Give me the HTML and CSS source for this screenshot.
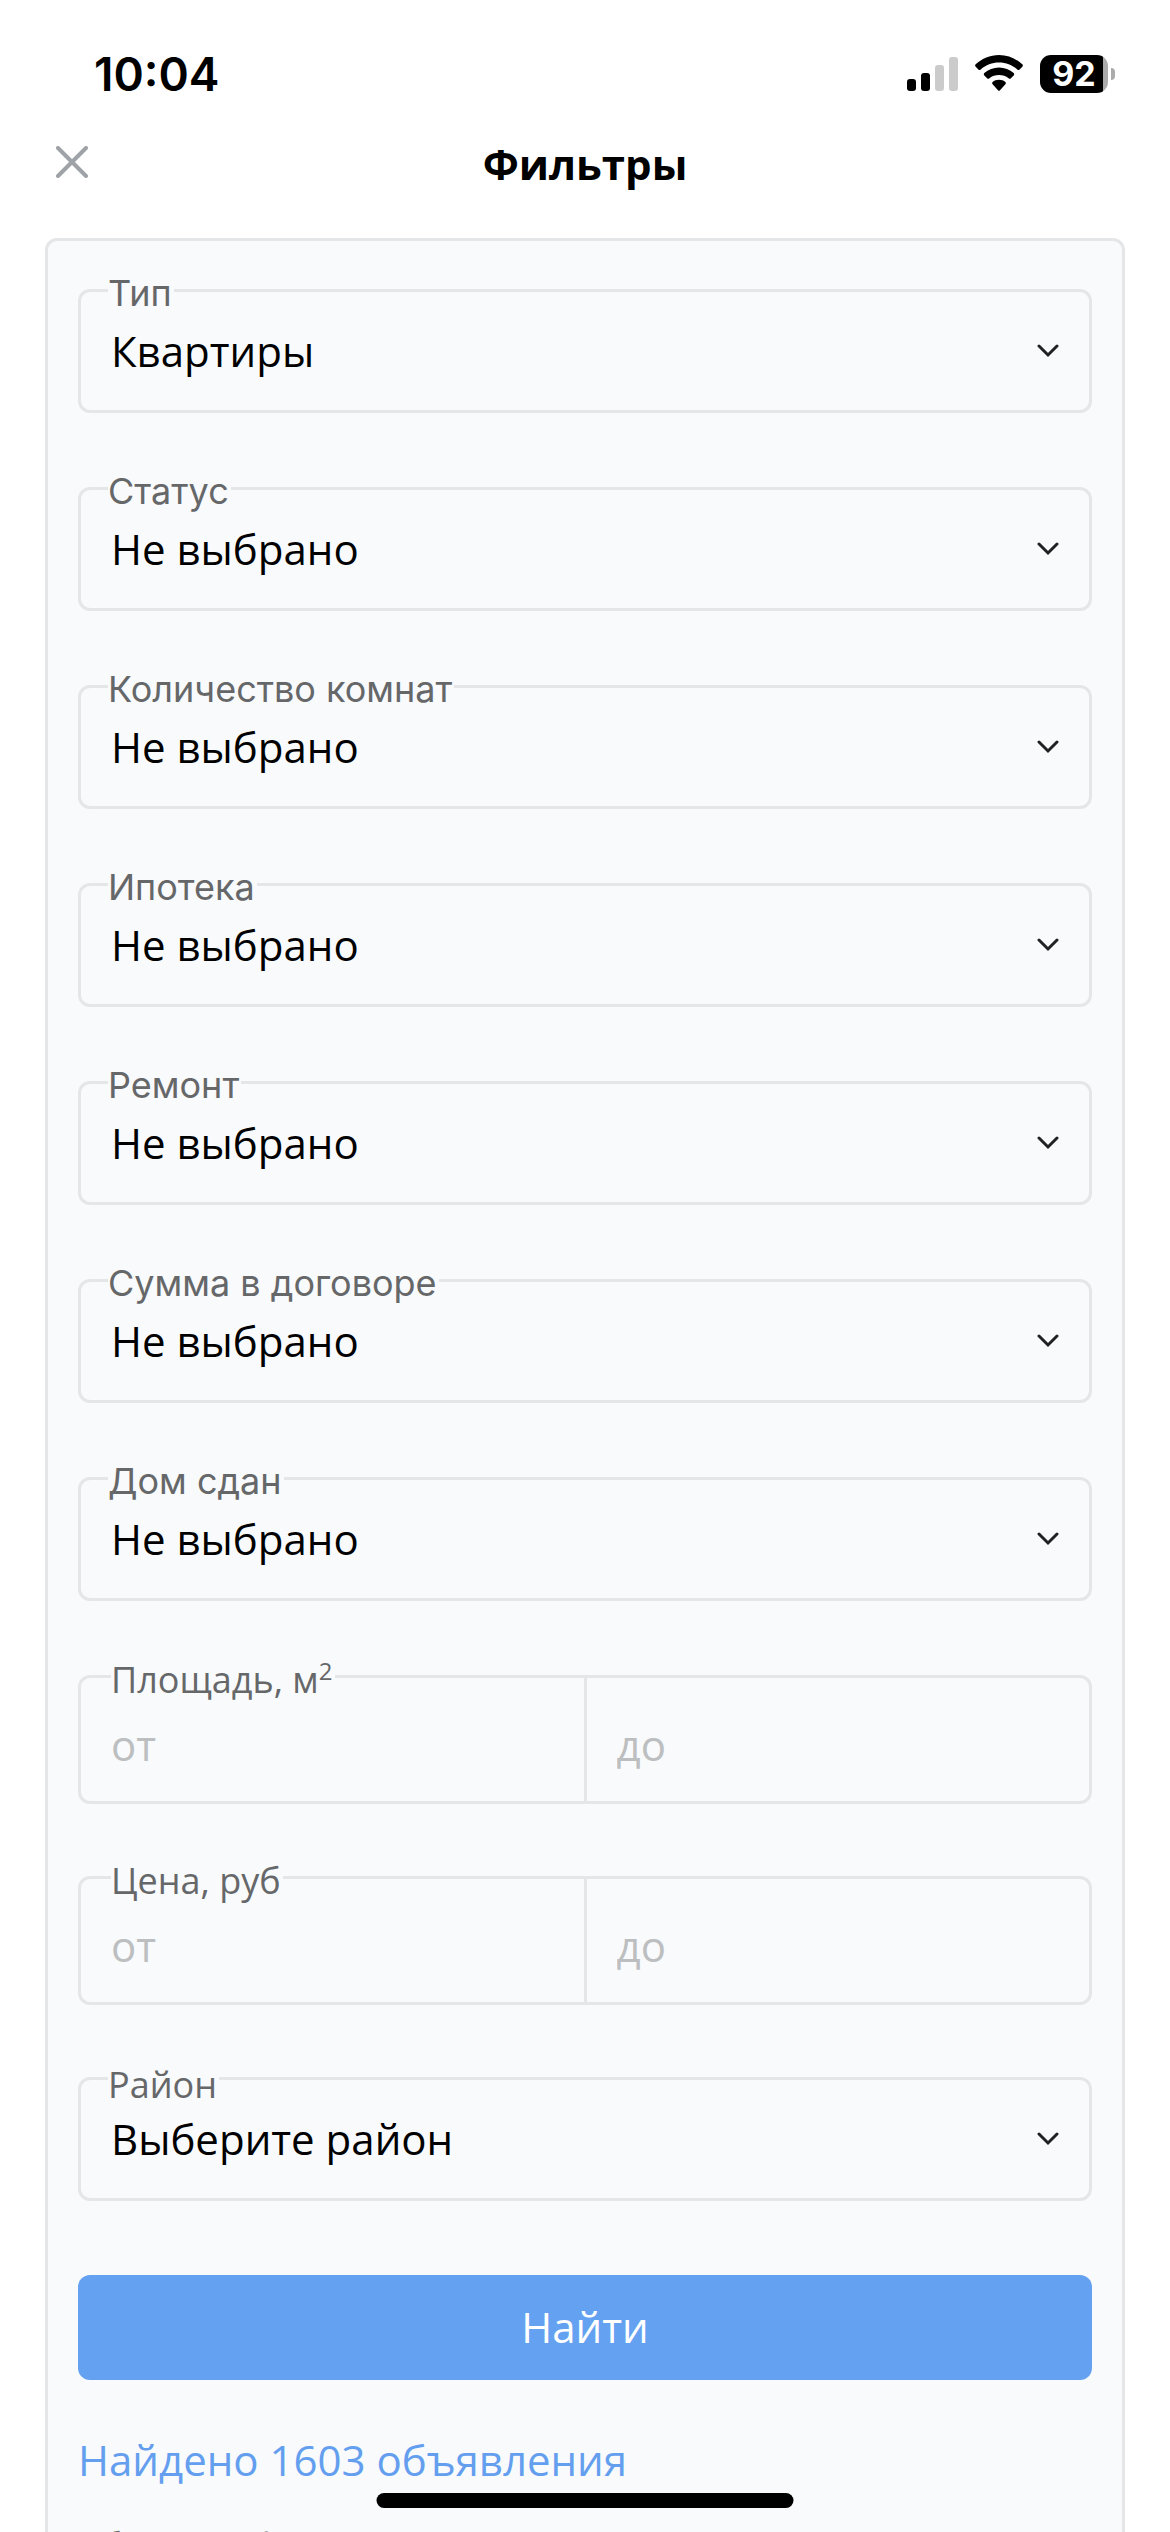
FILE: index.html
```html
<!DOCTYPE html>
<html lang="ru">
<head>
  <meta charset="UTF-8" />
  <meta name="viewport" content="width=device-width, initial-scale=1.0" />
  <title>Фильтры</title>
  <link rel="stylesheet" href="styles.css">
</head>
<body>
  <div class="status-bar">
    <span class="time">10:04</span>
    <div class="status-icons">
      <svg class="signal" width="51" height="38" viewBox="0 0 51 38">
        <rect x="0" y="24" width="9" height="12" rx="3" />
        <rect x="14" y="18" width="9" height="18" rx="3" />
        <rect x="28" y="10" width="9" height="26" rx="3" fill="#cbcbcb" />
        <rect x="42" y="2" width="9" height="34" rx="3" fill="#cbcbcb" />
      </svg>
      <svg class="wifi" width="48" height="38" viewBox="0 0 48 38">
        <path d="M24 0C33 0 41 3.500 47.300 9.300Q48.500 10.500 47.300 11.700L44.600 14.500Q43.500 15.500 42.300 14.500C37 10 31 7.600 24 7.600S11 10 5.700 14.500Q4.500 15.500 3.400 14.500L.7 11.700Q-.5 10.500 .7 9.300C7 3.500 15 0 24 0Z" />
        <path d="M24 12.500C29.600 12.500 34.700 14.600 38.700 18.100Q39.900 19.200 38.700 20.400L35.900 23.200Q34.800 24.200 33.600 23.200C30.900 21 27.700 19.900 24 19.900S17.100 21 14.400 23.200Q13.200 24.200 12.100 23.200L9.300 20.400Q8.100 19.200 9.300 18.100C13.300 14.600 18.400 12.500 24 12.500Z" />
        <path d="M24 24.800C26.500 24.800 28.700 25.600 30.400 27Q31.500 28 30.400 29.200L25 35.200Q24 36.300 23 35.200L17.600 29.200Q16.500 28 17.600 27C19.300 25.600 21.500 24.800 24 24.800Z" />
      </svg>
      <div class="battery">
        <span class="battery-level">92</span>
      </div>
    </div>
  </div>

  <header class="header">
    <button class="close" type="button" aria-label="Закрыть">
      <svg width="32" height="32" viewBox="0 0 32 32">
        <path d="M2 2L30 30M30 2L2 30" />
      </svg>
    </button>
    <h1>Фильтры</h1>
  </header>

  <form class="filters" autocomplete="off">
    <div class="field">
      <label for="type">Тип</label>
      <select id="type" name="type">
        <option>Квартиры</option>
        <option>Дома</option>
      </select>
      <svg class="arrow" viewBox="0 0 22 14"><path d="M2 2L11 11L20 2" /></svg>
    </div>

    <div class="field">
      <label for="status">Статус</label>
      <select id="status" name="status">
        <option>Не выбрано</option>
      </select>
      <svg class="arrow" viewBox="0 0 22 14"><path d="M2 2L11 11L20 2" /></svg>
    </div>

    <div class="field">
      <label for="rooms">Количество комнат</label>
      <select id="rooms" name="rooms">
        <option>Не выбрано</option>
      </select>
      <svg class="arrow" viewBox="0 0 22 14"><path d="M2 2L11 11L20 2" /></svg>
    </div>

    <div class="field">
      <label for="mortgage">Ипотека</label>
      <select id="mortgage" name="mortgage">
        <option>Не выбрано</option>
      </select>
      <svg class="arrow" viewBox="0 0 22 14"><path d="M2 2L11 11L20 2" /></svg>
    </div>

    <div class="field">
      <label for="repair">Ремонт</label>
      <select id="repair" name="repair">
        <option>Не выбрано</option>
      </select>
      <svg class="arrow" viewBox="0 0 22 14"><path d="M2 2L11 11L20 2" /></svg>
    </div>

    <div class="field">
      <label for="contract">Сумма в договоре</label>
      <select id="contract" name="contract">
        <option>Не выбрано</option>
      </select>
      <svg class="arrow" viewBox="0 0 22 14"><path d="M2 2L11 11L20 2" /></svg>
    </div>

    <div class="field">
      <label for="ready">Дом сдан</label>
      <select id="ready" name="ready">
        <option>Не выбрано</option>
      </select>
      <svg class="arrow" viewBox="0 0 22 14"><path d="M2 2L11 11L20 2" /></svg>
    </div>

    <div class="field range">
      <label for="area_from">Площадь, м<sup>2</sup></label>
      <input id="area_from" name="area_from" type="text" inputmode="numeric" placeholder="от" />
      <input name="area_to" type="text" inputmode="numeric" placeholder="до" aria-label="Площадь до" />
    </div>

    <div class="field range">
      <label for="price_from">Цена, руб</label>
      <input id="price_from" name="price_from" type="text" inputmode="numeric" placeholder="от" />
      <input name="price_to" type="text" inputmode="numeric" placeholder="до" aria-label="Цена до" />
    </div>

    <div class="field district">
      <label for="district">Район</label>
      <select id="district" name="district">
        <option>Выберите район</option>
      </select>
      <svg class="arrow" viewBox="0 0 22 14"><path d="M2 2L11 11L20 2" /></svg>
    </div>

    <button class="submit" type="submit">Найти</button>

    <a class="found" href="#">Найдено 1603 объявления</a>
    <button class="reset" type="reset">Сбросить фильтры</button>
  </form>

  <div class="home-indicator"></div>
</body>
</html>
```

FILE: styles.css
```css
* {
  box-sizing: border-box;
}
body {
  margin: 0;
  height: 100vh;
  overflow: hidden;
  display: flex;
  flex-direction: column;
  background: #fff;
  color: #000;
  font-family: "Open Sans", "Noto Sans", sans-serif;
}

/* Status bar */
.status-bar {
  display: flex;
  flex-shrink: 0;
  justify-content: space-between;
  align-items: center;
  height: 128px;
  padding: 20px 54px 0 94px;
}
.time {
  font-family: Inter, sans-serif;
  font-size: 46px;
  font-weight: 600;
}
.status-icons {
  display: flex;
  align-items: center;
  gap: 17px;
}
.battery {
  position: relative;
  width: 68px;
  height: 38px;
  margin-right: 8px;
  border-radius: 11px;
  background: linear-gradient(to right, #000 63px, #ababab 63px);
}
.battery::after {
  content: "";
  position: absolute;
  left: 71px;
  top: 13px;
  width: 4px;
  height: 12px;
  border-radius: 0 6px 6px 0;
  background: #ababab;
}
.battery-level {
  display: block;
  color: #fff;
  font-family: Inter, sans-serif;
  font-size: 34px;
  font-weight: 700;
  line-height: 38px;
  text-align: center;
}

/* Header */
.header {
  display: flex;
  flex-shrink: 0;
  align-items: center;
  height: 110px;
  padding: 0 56px 42px;
}
.close {
  width: 32px;
  height: 32px;
  padding: 0;
  border: none;
  background: none;
  cursor: pointer;
}
.close svg {
  display: block;
  fill: none;
  stroke: #9fa2a6;
  stroke-width: 4;
  stroke-linecap: round;
}
.header h1 {
  flex: 1;
  margin: 0 32px 0 0;
  padding-top: 4px;
  font-size: 42px;
  font-weight: 700;
  line-height: 56px;
  text-align: center;
}

/* Filters */
.filters {
  flex-shrink: 0;
  display: flex;
  flex-direction: column;
  margin: 0 45px;
  padding: 48px 30px;
  border: 3px solid #e4e6e7;
  border-radius: 12px;
  background: #f8fafc;
}
.field {
  position: relative;
  display: flex;
  height: 124px;
  margin-bottom: 74px;
  border: 3px solid #e4e6e7;
  border-radius: 12px;
}
.field label {
  position: absolute;
  top: -23px;
  left: 27px;
  padding-right: 2px;
  background: #f8fafc;
  color: #666769;
  font-family: Inter, sans-serif;
  font-size: 36px;
  line-height: 48px;
}
.field select {
  flex: 1;
  min-width: 0;
  padding: 0 64px 2px 30px;
  border: none;
  outline: none;
  appearance: none;
  background: none;
  color: #000;
  font: inherit;
  font-size: 42px;
}
.arrow {
  position: absolute;
  top: 52px;
  right: 30px;
  width: 22px;
  height: 14px;
  fill: none;
  stroke: #202123;
  stroke-width: 3;
  stroke-linecap: round;
  pointer-events: none;
}
.range {
  height: 129px;
  margin-bottom: 72px;
}
.range label {
  top: -22px;
  left: 30px;
}
.range label,
.district label {
  font-family: inherit;
}
.district label {
  top: -19px;
}
.range sup {
  font-size: 24px;
  line-height: 0;
}
.range input {
  flex: 1;
  min-width: 0;
  padding: 10px 30px 0;
  border: none;
  outline: none;
  background: none;
  color: #000;
  font: inherit;
  font-size: 42px;
}
.range input + input {
  border-left: 3px solid #e4e6e7;
}
.range input::placeholder {
  color: #bcbec0;
  opacity: 1;
}
.submit {
  height: 105px;
  padding: 0 0 2px;
  border: none;
  border-radius: 12px;
  background: #64a1f1;
  color: #fff;
  font: inherit;
  font-size: 42px;
  cursor: pointer;
}
.found {
  margin-top: 51px;
  color: #649fef;
  font-size: 42px;
  line-height: 57px;
  text-decoration: none;
}
.reset {
  align-self: flex-start;
  margin-top: 33px;
  padding: 0;
  border: none;
  background: none;
  color: #666769;
  font: inherit;
  font-size: 36px;
  line-height: 49px;
  cursor: pointer;
}

.home-indicator {
  position: fixed;
  bottom: 24px;
  left: 50%;
  width: 417px;
  height: 15px;
  transform: translateX(-50%);
  border-radius: 8px;
  background: #000;
}
```
